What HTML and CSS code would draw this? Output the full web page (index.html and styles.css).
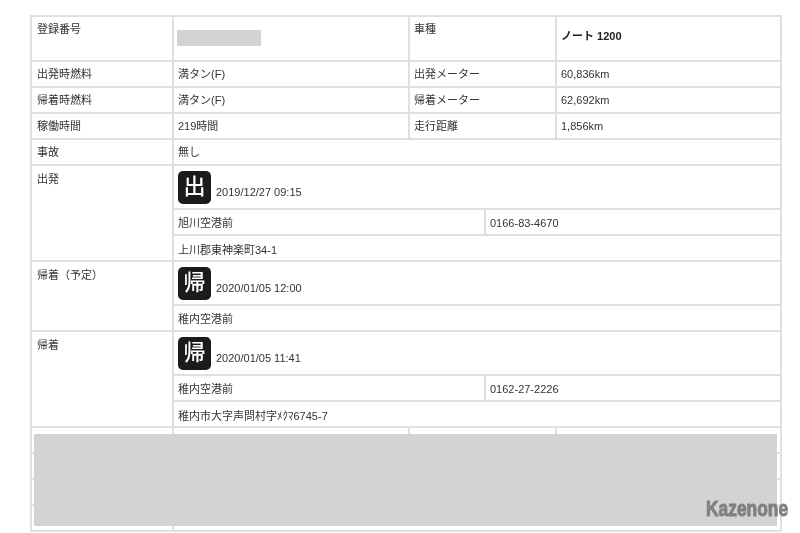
FILE: index.html
```html
<!DOCTYPE html>
<html lang="ja">
<head>
<meta charset="utf-8">
<title>貸渡記録</title>
<link rel="stylesheet" href="styles.css">
</head>
<body>
<main class="page">
<table class="record">
<colgroup>
<col class="c1"><col class="c2"><col class="c3"><col class="c4"><col class="c5">
</colgroup>
<tbody>
<tr class="h45"><td class="top">登録番号</td><td><span class="mask"></span></td><td class="top" colspan="2">車種</td><td class="strong">ノート 1200</td></tr>
<tr class="h26"><td>出発時燃料</td><td>満タン(F)</td><td colspan="2">出発メーター</td><td>60,836km</td></tr>
<tr class="h26"><td>帰着時燃料</td><td>満タン(F)</td><td colspan="2">帰着メーター</td><td>62,692km</td></tr>
<tr class="h26"><td>稼働時間</td><td>219時間</td><td colspan="2">走行距離</td><td>1,856km</td></tr>
<tr class="h26"><td>事故</td><td colspan="4">無し</td></tr>
<tr class="h44"><td class="top label" rowspan="3">出発</td><td colspan="4"><span class="stamp">出</span><span class="when">2019/12/27 09:15</span></td></tr>
<tr class="h26"><td class="low" colspan="2">旭川空港前</td><td class="low" colspan="2">0166-83-4670</td></tr>
<tr class="h26"><td class="lower" colspan="4">上川郡東神楽町34-1</td></tr>
<tr class="h44"><td class="top label" rowspan="2">帰着（予定）</td><td colspan="4"><span class="stamp">帰</span><span class="when">2020/01/05 12:00</span></td></tr>
<tr class="h26"><td class="low" colspan="4">稚内空港前</td></tr>
<tr class="h44"><td class="top label" rowspan="3">帰着</td><td colspan="4"><span class="stamp">帰</span><span class="when">2020/01/05 11:41</span></td></tr>
<tr class="h26"><td class="low" colspan="2">稚内空港前</td><td class="low" colspan="2">0162-27-2226</td></tr>
<tr class="h26"><td class="lower" colspan="4">稚内市大字声問村字ﾒｸﾏ6745-7</td></tr>
<tr class="h26"><td></td><td></td><td colspan="2"></td><td></td></tr>
<tr class="h26"><td></td><td></td><td colspan="2"></td><td></td></tr>
<tr class="h26"><td></td><td></td><td colspan="2"></td><td></td></tr>
<tr class="h26"><td></td><td colspan="4"></td></tr>
</tbody>
</table>
<div class="cover"></div>
<div class="mark">Kazenone</div>
</main>
</body>
</html>
```
FILE: styles.css
```css
html, body {
  margin: 0;
  padding: 0;
  background: #fff;
}
body {
  width: 800px;
  height: 533px;
  overflow: hidden;
}
.page {
  position: relative;
  width: 800px;
  height: 533px;
  padding: 15px 0 0 30px;
  box-sizing: border-box;
}
.record {
  table-layout: fixed;
  width: 750px;
  border-collapse: collapse;
  font-family: "Liberation Sans", "Noto Sans CJK JP", sans-serif;
  font-size: 11px;
  line-height: 14px;
  color: #333;
  filter: blur(0.3px);
}
.c1 { width: 142px; }
.c2 { width: 236px; }
.c3 { width: 76px; }
.c4 { width: 71px; }
.c5 { width: 225px; }
.record td {
  border: 2px solid #e0e0e0;
  padding: 0 5px 0 4px;
  vertical-align: middle;
}
.record td:first-child {
  padding-left: 5px;
}
.record td.top {
  vertical-align: top;
  padding-top: 5px;
}
.record td.label {
  padding-top: 6px;
}
.record td.low {
  padding-top: 2px;
  padding-left: 4px;
}
.record td.lower {
  padding-top: 4px;
  padding-left: 4px;
}
.h45 { height: 45px; }
.h44 { height: 44px; }
.h26 { height: 26px; }
.record td.strong {
  font-weight: 700;
  color: #222;
  padding-bottom: 5px;
}
.mask {
  display: block;
  width: 84px;
  height: 16px;
  margin: 0 0 2px -1px;
  background: #d3d3d3;
}
.stamp {
  display: inline-block;
  width: 33px;
  height: 33px;
  margin-right: 5px;
  border-radius: 5px;
  background: #1b1b1b;
  color: #fff;
  font-size: 22px;
  font-weight: 500;
  line-height: 32px;
  text-align: center;
  vertical-align: bottom;
}
.when {
  display: inline-block;
  line-height: 14px;
  vertical-align: bottom;
  padding-bottom: 5px;
}
.cover {
  position: absolute;
  left: 34px;
  top: 434px;
  width: 743px;
  height: 92px;
  background: #d3d3d3;
}
.mark {
  position: absolute;
  left: 706px;
  top: 497px;
  font-family: "Liberation Sans", sans-serif;
  font-size: 22px;
  line-height: 24px;
  font-weight: 700;
  color: #808080;
  -webkit-text-stroke: 1px #808080;
  white-space: nowrap;
  transform: scaleX(0.79);
  transform-origin: left center;
}
```
